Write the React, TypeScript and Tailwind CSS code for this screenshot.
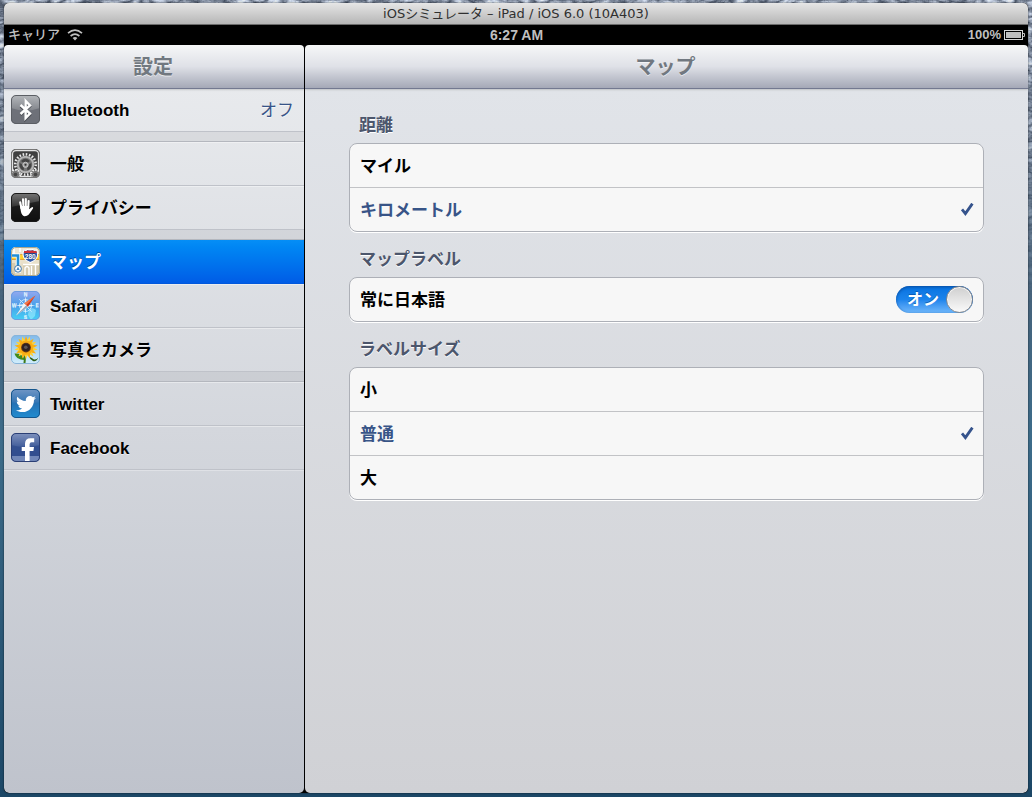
import { useState } from 'react';
import type { ReactNode } from 'react';
import { FaTwitter } from 'react-icons/fa';

/* ---------- icons ---------- */

function IconFrame({ id, from, mid, to, stroke, children }: {
  id: string;
  from: string;
  mid: string;
  to: string;
  stroke: string;
  children: ReactNode;
}) {
  return (
    <svg viewBox="0 0 29 29" className="size-[29px] shrink-0" aria-hidden="true">
      <defs>
        <linearGradient id={id} x1="0" y1="0" x2="0" y2="1">
          <stop offset="0" stopColor={from} />
          <stop offset="0.5" stopColor={mid} />
          <stop offset="1" stopColor={to} />
        </linearGradient>
        <clipPath id={`${id}-clip`}>
          <rect width="29" height="29" rx="5" />
        </clipPath>
      </defs>
      <g clipPath={`url(#${id}-clip)`}>
        <rect width="29" height="29" fill={`url(#${id})`} />
        {children}
      </g>
      <rect x="0.5" y="0.5" width="28" height="28" rx="4.5" fill="none" stroke={stroke} />
    </svg>
  );
}

function BluetoothIcon() {
  return (
    <IconFrame id="bt" from="#b5b8bc" mid="#85888e" to="#808389" stroke="#5b5e64">
      <path d="M0 13 Q14.5 18 29 13 V29 H0Z" fill="#62666e" opacity="0.65" />
      <path d="M9.5 10.5 L19 19 L14.5 23.5 V6 L19 10.5 L9.5 19" transform="translate(0 1)" fill="none" stroke="#4c4f55" strokeWidth="2.4" />
      <path d="M9.5 10 L19 18.6 L14.6 23 V6 L19 10.4 L9.5 19" fill="none" stroke="#fff" strokeWidth="2.4" strokeLinejoin="miter" />
    </IconFrame>
  );
}

function GeneralIcon() {
  return (
    <IconFrame id="gen" from="#3c3c3c" mid="#484848" to="#303030" stroke="#777">
      <rect x="1.5" y="1.5" width="26" height="26" rx="3.5" fill="none" stroke="#e4e4e4" strokeWidth="1.3" />
      <circle cx="14.5" cy="15.5" r="10.2" fill="none" stroke="#e6e6e6" strokeWidth="2.6" strokeDasharray="1.6 1.6" />
      <circle cx="14.5" cy="15.5" r="7.8" fill="#777" stroke="#b4b4b4" strokeWidth="2" />
      <path d="M10 12 Q14.5 7.6 19 12 L16.8 13.8 Q14.5 12 12.2 13.8Z" fill="#444" />
      <path d="M8.6 14 L11.4 15.4 Q11.2 17.6 13 18.8 L12.6 21.6 Q8 19.8 8.6 14Z" fill="#444" />
      <path d="M20.4 14 L17.6 15.4 Q17.8 17.6 16 18.8 L16.4 21.6 Q21 19.8 20.4 14Z" fill="#444" />
      <circle cx="14.5" cy="15.8" r="2.6" fill="#9d9d9d" stroke="#d2d2d2" strokeWidth="0.8" />
      <circle cx="14.5" cy="15.8" r="1" fill="#333" />
      <circle cx="4.5" cy="25.5" r="4.6" fill="#777" stroke="#eee" strokeWidth="2" strokeDasharray="1.4 1.2" />
      <circle cx="24.5" cy="25.5" r="4.6" fill="#777" stroke="#eee" strokeWidth="2" strokeDasharray="1.4 1.2" />
      <circle cx="4.5" cy="25.5" r="1.8" fill="#444" />
      <circle cx="24.5" cy="25.5" r="1.8" fill="#444" />
    </IconFrame>
  );
}

function PrivacyIcon() {
  return (
    <IconFrame id="priv" from="#777" mid="#2e2e2e" to="#151515" stroke="#1b1b1b">
      <path d="M0 14 Q14 11 29 8 V29 H0Z" fill="#0b0b0b" opacity="0.6" />
      <g stroke="#fff" strokeWidth="2.1" strokeLinecap="round" fill="none">
        <path d="M9.2 9.2 L10.4 15" />
        <path d="M12 6.4 L12.5 14" />
        <path d="M14.8 6 V14" />
        <path d="M17.6 8 L17.2 15" />
      </g>
      <path d="M9 13 H18.2 L18 16.2 L21.2 14 Q22.6 14.4 22 15.6 L17.8 21.4 Q16 23.4 13.4 23.2 Q10.8 22.6 10 19Z" fill="#fff" />
    </IconFrame>
  );
}

function MapsIcon() {
  return (
    <IconFrame id="maps" from="#eee8d8" mid="#e9e1cb" to="#ded5bd" stroke="#aaa78f">
      <path d="M3 0 V7 M9 0 V5 M10 25 H0" fill="none" stroke="#fff" strokeWidth="1.6" />
      <path d="M0 16 H4 V29 H0Z M12 17 H29 V29 H12Z" fill="#d5cbb0" />
      <path d="M14 29 V21 Q16 18 18 21 V29 M20.5 29 V19 M24.5 29 V17 M12 17.5 H29" fill="none" stroke="#fff" strokeWidth="1.4" />
      <path d="M0 10 H29" stroke="#d98d08" strokeWidth="5.6" />
      <path d="M0 10 H29" stroke="#ffd02c" strokeWidth="4" />
      <path d="M0 8.5 H7 V21" fill="none" stroke="#fff" strokeWidth="4.2" />
      <path d="M0 8.5 H7 V21" fill="none" stroke="#238fd6" strokeWidth="2.6" />
      <circle cx="7" cy="21.8" r="3.4" fill="#fff" stroke="#3f78ad" strokeWidth="1" />
      <path d="M7 19.8 L8.8 23.6 L7 22.8 L5.2 23.6Z" fill="#397fbf" />
      <path d="M13 3 Q15 4 16.5 2.4 Q19 3.4 21.5 2.4 Q23.5 4 25.5 3 Q29.5 11.5 19.3 15.5 Q9.4 11.5 13 3Z" fill="#2e59a9" stroke="#fff" strokeWidth="1.1" />
      <path d="M13.4 3.8 Q15 4.5 16.7 3.2 Q19 4.2 21.3 3.2 Q23.5 4.6 25.2 3.8 L26 6 H12.7Z" fill="#ce3037" />
      <text x="19.3" y="12" textAnchor="middle" fontSize="6.5" fontWeight="700" fontFamily="Liberation Sans, sans-serif" fill="#fff">280</text>
    </IconFrame>
  );
}

function SafariIcon() {
  return (
    <IconFrame id="saf" from="#94a8ef" mid="#499fe9" to="#45d1f5" stroke="#6d9ce0">
      <path d="M18 18 Q22 16 25 19 L24 25 L20 29 L17 24Z" fill="#9eecff" opacity="0.6" />
      <circle cx="14.5" cy="14.5" r="6" fill="none" stroke="#c4e6fc" strokeWidth="1" />
      <path d="M14.5 5.5 L16 12.5 L14.5 23.5 L13 16Z M4.5 14.5 L13 13 L24.5 14.5 L16 16Z" fill="#e9f7ff" opacity="0.9" />
      <path d="M8.3 8.3 L20.7 20.7" stroke="#c4e6fc" strokeWidth="1" />
      <g fill="#dcf1ff" fontSize="5" fontWeight="700" fontFamily="Liberation Sans, sans-serif" textAnchor="middle">
        <text x="14.5" y="5.4">N</text>
        <text x="14.5" y="27.6">S</text>
        <text x="3.2" y="16.2">W</text>
        <text x="26.2" y="16.2">E</text>
      </g>
      <path d="M24.5 4.5 L16.8 16 L13.2 12.6Z" fill="#d93a1c" />
      <path d="M24.5 4.5 L13.2 12.6 L15 14.2Z" fill="#f27a4a" />
      <path d="M5 24.5 L13.2 12.6 L16.8 16Z" fill="#f7f7f7" />
      <path d="M5 24.5 L16.8 16 L15 14.4Z" fill="#96a7bb" />
    </IconFrame>
  );
}

const PETALS = Array.from({ length: 18 }, (_, i) => i * 20);

function PhotosIcon() {
  return (
    <IconFrame id="pho" from="#80b9ea" mid="#a9d6f5" to="#d3eefb" stroke="#88b4d9">
      <path d="M14.2 20 L13.4 29" stroke="#3c7a18" strokeWidth="2" />
      <path d="M13.5 24 Q11 18 3.5 18.5 Q5 25 13.5 25Z" fill="#3e8a1c" />
      <path d="M18 21.5 Q21 23 23 24.4 Q25.5 25 27.5 22.5 Q25.5 27 22 26 Q19 24.5 18 21.5Z" fill="#2d5d16" />
      {PETALS.map((angle) => (
        <path key={angle} d="M12.4 8 L15 0.9 L17.6 8Z" transform={`rotate(${angle} 15 12.6)`} fill={angle % 40 ? '#ffd034' : '#f9b012'} />
      ))}
      <circle cx="15" cy="12.6" r="7.2" fill="#f8ae16" />
      <circle cx="15" cy="12.6" r="4.9" fill="#6f3c12" />
      <circle cx="15" cy="12.6" r="4" fill="#2f2323" />
      <circle cx="14.8" cy="12.2" r="1.8" fill="#5c5657" />
    </IconFrame>
  );
}

function TwitterIcon() {
  return (
    <IconFrame id="tw" from="#7196c5" mid="#2f73b3" to="#2a9ee0" stroke="#16568c">
      <path d="M0 13 Q14.5 17 29 13 V29 H0Z" fill="#1672b8" opacity="0.4" />
      <FaTwitter x="5" y="5" size={20} color="#fff" />
    </IconFrame>
  );
}

function FacebookIcon() {
  return (
    <IconFrame id="fb" from="#8093be" mid="#3f5b99" to="#3a5594" stroke="#2b3f75">
      <path d="M0 12 Q14.5 16 29 12 V23 H0Z" fill="#2e4a8c" opacity="0.7" />
      <rect y="23" width="29" height="6" fill="#7187b8" />
      <path d="M14 28 V18 H10.7 V14 H14 V10.8 Q14 5.2 19.4 5.2 H23.2 V9.2 H20.6 Q18.6 9.2 18.6 11.2 V14 H23 L22.4 18 H18.6 V28Z" fill="#fff" />
    </IconFrame>
  );
}

function CheckIcon() {
  return (
    <svg viewBox="0 0 14 14" className="hidden size-[14px] peer-checked:block" aria-hidden="true">
      <path d="M2 6.4 L5.4 10.6 L12.4 0.6" fill="none" stroke="#35538c" strokeWidth="2.8" />
    </svg>
  );
}

function WifiIcon() {
  return (
    <svg viewBox="0 0 16 12" className="h-3 w-4" aria-label="Wi-Fi">
      <g fill="none" stroke="#bfbfbf" strokeWidth="1.7">
        <path d="M1 4.2 Q8 -1.8 15 4.2" />
        <path d="M3.6 7 Q8 3.2 12.4 7" />
      </g>
      <path d="M5.6 9 Q8 7 10.4 9 L8 11.6Z" fill="#bfbfbf" />
    </svg>
  );
}

function BatteryIcon() {
  return (
    <svg viewBox="0 0 21 11" className="h-[11px] w-[21px]" aria-hidden="true">
      <rect x="0.5" y="0.5" width="18" height="9" fill="none" stroke="#d5d5d5" />
      <rect x="2" y="2" width="15" height="6" fill="#bfbfbf" />
      <path d="M19 3.5 H20.5 V6.5 H19" fill="none" stroke="#bfbfbf" />
    </svg>
  );
}

/* ---------- desktop behind the window ---------- */

function Wallpaper() {
  return (
    <svg className="absolute inset-0 -z-10 size-full" aria-hidden="true">
      <defs>
        <linearGradient id="sea" x1="0" y1="0" x2="0" y2="1">
          <stop offset="0" stopColor="#8794a8" />
          <stop offset="0.15" stopColor="#5f6f82" />
          <stop offset="0.35" stopColor="#47627a" />
          <stop offset="0.55" stopColor="#3d6c8a" />
          <stop offset="1" stopColor="#1c4766" />
        </linearGradient>
        <linearGradient id="fade" x1="0" y1="0" x2="0" y2="1">
          <stop offset="0" stopColor="#ccc" />
          <stop offset="0.2" stopColor="#888" />
          <stop offset="0.38" stopColor="#000" />
        </linearGradient>
        <mask id="rock-mask">
          <rect width="100%" height="100%" fill="url(#fade)" />
        </mask>
        <filter id="rock" x="0" y="0" width="100%" height="100%" colorInterpolationFilters="sRGB">
          <feTurbulence type="turbulence" baseFrequency="0.06 0.12" numOctaves="4" seed="8" />
          <feColorMatrix values="1.3 0 0 0 0.16  1.3 0 0 0 0.2  1.3 0 0 0 0.27  0 0 0 0 1" />
        </filter>
      </defs>
      <rect width="100%" height="100%" fill="url(#sea)" />
      <g mask="url(#rock-mask)">
        <rect width="100%" height="100%" filter="url(#rock)" />
      </g>
    </svg>
  );
}

/* ---------- sidebar ---------- */

type Item = { name: string; icon: ReactNode; value?: string };

const GROUPS: Item[][] = [
  [{ name: 'Bluetooth', icon: <BluetoothIcon />, value: 'オフ' }],
  [
    { name: '一般', icon: <GeneralIcon /> },
    { name: 'プライバシー', icon: <PrivacyIcon /> },
  ],
  [
    { name: 'マップ', icon: <MapsIcon /> },
    { name: 'Safari', icon: <SafariIcon /> },
    { name: '写真とカメラ', icon: <PhotosIcon /> },
  ],
  [
    { name: 'Twitter', icon: <TwitterIcon /> },
    { name: 'Facebook', icon: <FacebookIcon /> },
  ],
];

function SidebarRow({ item, active, onSelect }: { item: Item; active: boolean; onSelect: () => void }) {
  return (
    <button
      type="button"
      onClick={onSelect}
      aria-current={active ? 'page' : undefined}
      className={
        active
          ? 'flex h-11 w-full items-center gap-[10px] border-b border-[#0158dc] bg-linear-to-b from-[#058ef6] to-[#015ce6] px-[7px] text-left text-white text-shadow-[0_-1px_0_rgba(0,0,0,0.4)]'
          : 'flex h-11 w-full items-center gap-[10px] border-b border-b-[#bfc2c9] px-[7px] text-left text-black inset-shadow-[0_1px_0_rgba(255,255,255,0.4)] text-shadow-[0_1px_0_rgba(255,255,255,0.6)]'
      }
    >
      {item.icon}
      <span className="flex-1 pt-0.5">{item.name}</span>
      {item.value && <span className="pr-[3px] pt-0.5 font-normal text-[#385487]">{item.value}</span>}
    </button>
  );
}

function TitleBar({ title }: { title: string }) {
  return (
    <h1 className="relative z-10 flex h-[43px] shrink-0 items-center justify-center rounded-t-[4px] bg-linear-to-b from-[#f6f7f8] via-[#dfe1e7] to-[#a5a9b7] pr-0.5 text-xl font-bold text-[#717880] shadow-[0_1px_0_#737990,0_2px_2px_rgba(0,0,0,0.15)] text-shadow-[0_1px_0_rgba(255,255,255,0.6)]">
      {title}
    </h1>
  );
}

/* ---------- detail ---------- */

function Section({ title, children }: { title: string; children: ReactNode }) {
  return (
    <fieldset>
      <legend className="flex h-[45px] items-center px-[10px] pt-[11px] text-[17px] font-bold text-[#4c566c] text-shadow-[0_1px_0_#fff]">
        {title}
      </legend>
      <div className="divide-y divide-[#c2c3c6] rounded-lg border border-[#adb0b7] bg-[#f7f7f7] text-[17px] font-bold shadow-[0_1px_0_#fff]">
        {children}
      </div>
    </fieldset>
  );
}

function RadioGroup({ name, options, initial }: { name: string; options: string[]; initial: string }) {
  return (
    <>
      {options.map((option) => (
        <label key={option} className="flex h-11 items-center px-[9px] last:h-[43px] has-checked:text-[#385487]">
          <span className="flex-1 pl-px pt-0.5">{option}</span>
          <input type="radio" name={name} value={option} defaultChecked={option === initial} className="peer appearance-none" />
          <CheckIcon />
        </label>
      ))}
    </>
  );
}

function MapSettings() {
  const [japanese, setJapanese] = useState(true);

  return (
    <div className="flex-1 px-11 pt-[10px]">
      <Section title="距離">
        <RadioGroup name="distance" options={['マイル', 'キロメートル']} initial="キロメートル" />
      </Section>
      <Section title="マップラベル">
        <label className="flex h-[43px] items-center px-[10px]">
          <span className="flex-1 pt-0.5">常に日本語</span>
          <input
            type="checkbox"
            role="switch"
            checked={japanese}
            onChange={(e) => setJapanese(e.target.checked)}
            className="appearance-none"
          />
          <span
            className={
              japanese
                ? 'flex h-[27px] w-[77px] items-center justify-between rounded-full bg-linear-to-b from-[#0672e0] via-[#1b84ec] to-[#6fb8fb] pl-[11px] text-base text-white inset-shadow-[0_1px_3px_#0a4da0] text-shadow-[0_-1px_0_#0a5bb8]'
                : 'flex h-[27px] w-[77px] flex-row-reverse items-center justify-between rounded-full bg-[#eee] pr-[11px] text-base text-[#7f7f7f] inset-shadow-[0_1px_3px_#888]'
            }
          >
            {japanese ? 'オン' : 'オフ'}
            <span className="size-[27px] rounded-full border border-[#85888d] bg-linear-to-b from-[#cfcfcf] to-[#fafafa] inset-shadow-[0_0_0_1px_#f5f5f5]" />
          </span>
        </label>
      </Section>
      <Section title="ラベルサイズ">
        <RadioGroup name="size" options={['小', '普通', '大']} initial="普通" />
      </Section>
    </div>
  );
}

export default function App() {
  const [current, setCurrent] = useState('マップ');

  return (
    <div className="relative isolate flex min-h-screen flex-col px-1 pb-1 pt-[3px] font-['Liberation_Sans','Noto_Sans_CJK_JP',sans-serif]">
      <Wallpaper />
      <div className="flex flex-1 flex-col overflow-hidden rounded-[5px] bg-black shadow-[0_0_2px_rgba(0,0,0,0.7)]">
        {/* ウインドウのタイトル */}
        <header className="flex h-[22px] items-center justify-center border-b border-[#6b6b6b] bg-linear-to-b from-[#e6e6e6] to-[#b6b6b6] font-['DejaVu_Sans','Noto_Sans_CJK_JP',sans-serif] text-[13px] text-[#303030]">
          iOSシミュレータ – iPad / iOS 6.0 (10A403)
        </header>

        {/* ステータスバー */}
        <div className="grid h-5 grid-cols-3 items-center pl-1 pr-[3px] text-[13px] font-bold text-[#bfbfbf]">
          <div className="flex items-center gap-[7px]">
            <span className="font-medium">キャリア</span>
            <WifiIcon />
          </div>
          <time className="text-center text-sm">6:27 AM</time>
          <div className="flex items-center justify-end gap-[3px]">
            100%
            <BatteryIcon />
          </div>
        </div>

        <div className="flex flex-1">
          <aside className="flex w-[301px] shrink-0 flex-col border-r border-black">
            <TitleBar title="設定" />
            <nav className="flex flex-1 flex-col gap-[10px] rounded-b-[5px] bg-linear-to-b from-[#e8eaed] to-[#bfc3cc] text-[17px] font-bold">
              {GROUPS.map((group) => (
                <div
                  key={group[0].name}
                  className="shadow-[0_-1px_0_#b4b7be,0_10px_0_rgba(120,124,135,0.12)] last:shadow-[0_-1px_0_#b4b7be,0_1px_0_rgba(255,255,255,0.3)]"
                >
                  {group.map((item) => (
                    <SidebarRow
                      key={item.name}
                      item={item}
                      active={item.name === current}
                      onSelect={() => setCurrent(item.name)}
                    />
                  ))}
                </div>
              ))}
            </nav>
          </aside>
          <main className="flex flex-1 flex-col">
            <TitleBar title="マップ" />
            <div className="flex flex-1 rounded-b-[5px] bg-linear-to-b from-[#e1e4e9] to-[#d0d1d5]">
              <MapSettings />
            </div>
          </main>
        </div>
      </div>
    </div>
  );
}
